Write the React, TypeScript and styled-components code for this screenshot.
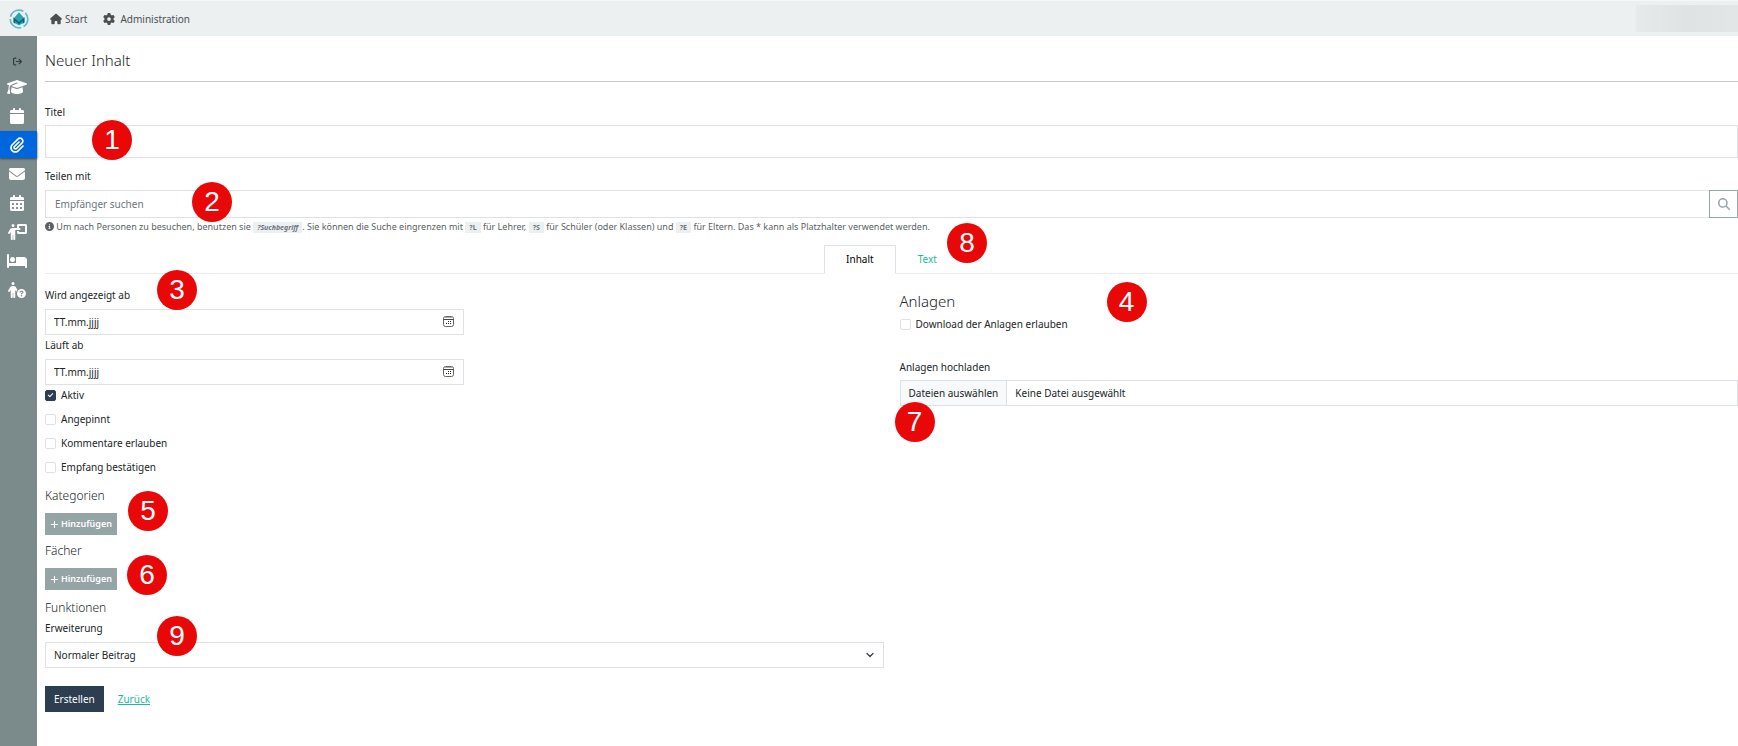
import React, { useState } from "react";
import styled, { createGlobalStyle, css } from "styled-components";
import {
  FaHouse, FaGear, FaGraduationCap, FaCalendar, FaPaperclip, FaEnvelope, FaCalendarDays,
  FaPersonChalkboard, FaBed, FaPersonCircleQuestion, FaCircleInfo, FaPlus, FaMagnifyingGlass, FaArrowRightFromBracket,
} from "react-icons/fa6";

const Global = createGlobalStyle`
  *, *::before, *::after { box-sizing: border-box; }
  body { margin: 0; background: #fff; color: #212529; font: 400 10px/16px "Noto Sans", sans-serif; }
  button, input, select { font: inherit; color: inherit; border-radius: 0; margin: 0; }
`;

const line = "#dee2e6";

const Page = styled.div`
  min-height: 100vh;
  display: flex;
  flex-direction: column;
`;

const Header = styled.header`
  height: 36px;
  display: flex;
  align-items: center;
  background: #ecf0f1;
  border-top: 1px solid #f5f7f8;
`;

const Logo = styled.a`
  width: 37px;
  display: flex;
  justify-content: center;
`;

const TopNav = styled.nav`
  display: flex;
  gap: 16px;
  padding-left: 13px;
  flex: 1;
`;

const TopLink = styled.a<{ $gap?: number }>`
  display: flex;
  align-items: center;
  gap: ${(p) => p.$gap ?? 3}px;
  color: #4b4f52;
  text-decoration: none;
  svg { width: 12px; height: 12px; }
`;

const UserArea = styled.div`
  width: 102px;
  height: 27px;
  background: linear-gradient(90deg, #e6eaeb, #dfe3e4 50%, #e2e6e7);
`;

const Body = styled.div`
  display: flex;
  flex: 1;
`;

const Sidebar = styled.nav`
  flex: 0 0 37px;
  display: flex;
  flex-direction: column;
  background: #7b8a8b;
  padding-top: 14px;
`;

const SideLink = styled.a<{ $active?: boolean; $dim?: boolean }>`
  height: 27px;
  margin-bottom: 2px;
  padding-right: 3px;
  display: flex;
  align-items: center;
  justify-content: center;
  color: #fff;
  svg { height: 16px; width: 20px; }
  ${(p) => p.$active && css`background: #0066dc; box-shadow: 0 1px 2px #3d4647;`}
  ${(p) => p.$dim && css`height: 22px; margin-bottom: 1px; color: #343a40; svg { height: 9px; width: 9px; }`}
`;

const Main = styled.main`
  flex: 1;
  min-width: 0;
  padding: 14px 0 32px 8px;
`;

const PageTitle = styled.h1`
  margin: 0;
  padding-bottom: 11px;
  font-size: 15px;
  line-height: 20px;
  font-weight: 300;
  border-bottom: 1px solid #c8cacc;
`;

const Heading = styled.h2<{ $large?: boolean; $top?: number }>`
  margin: 0;
  padding-top: ${(p) => p.$top ?? 0}px;
  font-size: ${(p) => (p.$large ? 15 : 12)}px;
  line-height: 20px;
  font-weight: 300;
`;

const Label = styled.label`
  display: block;
  line-height: 16px;
`;

const Field = styled.div<{ $top?: number; $gap?: number }>`
  display: flex;
  flex-direction: column;
  align-items: stretch;
  gap: ${(p) => p.$gap ?? 6}px;
  padding-top: ${(p) => p.$top ?? 0}px;
`;

const Input = styled.input<{ $tall?: boolean }>`
  width: 100%;
  min-width: 0;
  height: ${(p) => (p.$tall ? 33 : 26)}px;
  display: block;
  padding: 0 8px;
  border: 1px solid ${line};
  background: #fff;
  &::placeholder { color: inherit; opacity: 1; }
`;

const SearchGroup = styled.div`
  display: flex;
  height: 28px;
  ${Input} { flex: 1; height: 28px; padding: 0 9px; border-right: 0; color: #6c757d; }
`;

const SearchButton = styled.button`
  width: 29px;
  padding: 0;
  display: grid;
  place-items: center;
  border: 1px solid #95a5a6;
  background: #fff;
  color: #95a5a6;
  svg { width: 12px; height: 12px; }
`;

const Help = styled.p`
  margin: 0;
  padding-top: 2px;
  font-size: 9px;
  line-height: 14px;
  color: #5a5f63;
  svg { width: 9px; height: 9px; vertical-align: -1px; }
`;

const Code = styled.code<{ $italic?: boolean }>`
  padding: 1px 4px;
  background: #ecf0f1;
  font: ${(p) => (p.$italic ? "italic" : "normal")} 700 7px/12px "Noto Sans", sans-serif;
  color: #6c757d;
`;

const Tabs = styled.div`
  display: flex;
  justify-content: center;
  padding-top: 11px;
  border-bottom: 1px solid #ebedee;
`;

const Tab = styled.button<{ $active?: boolean }>`
  height: 29px;
  margin-bottom: -1px;
  padding: 0 21px 2px;
  border: 1px solid ${(p) => (p.$active ? line : "transparent")};
  border-bottom-color: ${(p) => (p.$active ? "#fff" : "transparent")};
  background: ${(p) => (p.$active ? "#fff" : "transparent")};
  color: ${(p) => (p.$active ? "#000" : "#18bc9c")};
`;

const Columns = styled.div`
  display: grid;
  grid-template-columns: 1fr 1fr;
  gap: 16px;
`;

const HalfWidth = styled.div`
  width: 50%;
`;

const Overlaid = styled.div`
  position: relative;
`;

const DateButton = styled.button`
  position: absolute;
  right: 10px;
  top: 7px;
  padding: 0;
  border: 0;
  background: none;
  display: flex;
`;

const CheckRow = styled.label`
  display: flex;
  align-items: center;
  gap: 5px;
  height: 24px;
`;

const Checkbox = styled.input`
  appearance: none;
  width: 11px;
  height: 11px;
  border: 1px solid ${line};
  border-radius: 2px;
  display: grid;
  place-items: center;
  &:checked { background: #2c3e50; border-color: #2c3e50; }
  &:checked::after {
    content: "";
    width: 3px;
    height: 5px;
    margin-top: -1px;
    border: solid #fff;
    border-width: 0 1px 1px 0;
    transform: rotate(45deg);
  }
`;

const CheckList = styled.div`
  margin: -2px 0 7px;
`;

const Section = styled.section`
  display: flex;
  flex-direction: column;
  align-items: flex-start;
  gap: 7px;
  margin-bottom: 6px;
`;

const AddButton = styled.button`
  height: 22px;
  display: flex;
  align-items: center;
  gap: 2px;
  padding: 0 5px;
  border: 0;
  background: #95a5a6;
  color: #fff;
  font-size: 9px;
  font-weight: 600;
`;

const Select = styled.select`
  appearance: none;
  display: block;
  width: 100%;
  height: 26px;
  padding: 0 8px;
  border: 1px solid ${line};
  background: #fff;
`;

const Chevron = styled.svg`
  position: absolute;
  right: 10px;
  top: 9px;
  pointer-events: none;
`;

const FileLabel = styled.label`
  display: flex;
  align-items: center;
  height: 26px;
  border: 1px solid ${line};
`;

const HiddenFile = styled.input`
  width: 0;
  height: 0;
  opacity: 0;
`;

const FileButton = styled.span`
  align-self: stretch;
  display: flex;
  align-items: center;
  padding: 0 8px;
  margin-right: 8px;
  border-right: 1px solid ${line};
  background: #f8f9fa;
`;

const Actions = styled.div`
  display: flex;
  align-items: center;
  gap: 14px;
  margin-top: 18px;
`;

const Submit = styled.button`
  height: 26px;
  padding: 0 9px;
  border: 0;
  background: #2c3e50;
  color: #fff;
`;

const BackLink = styled.a`
  color: #18bc9c;
`;

const Marker = styled.span<{ $x: number; $y: number }>`
  position: absolute;
  left: ${(p) => p.$x}px;
  top: ${(p) => p.$y}px;
  width: 40px;
  height: 40px;
  border-radius: 50%;
  background: #e90808;
  color: #fff;
  font: 28px/40px "Liberation Sans", Arial, sans-serif;
  text-align: center;
  pointer-events: none;
`;

const Anchor = styled.div`
  position: relative;
`;

const LogoMark = () => (
  <svg width="20" height="20" viewBox="0 0 20 20" aria-hidden="true">
    <circle cx="10" cy="10" r="8.8" fill="none" stroke="#5fbccb" strokeWidth="1.7" strokeDasharray="16 2.4" strokeDashoffset="7" />
    <circle cx="10" cy="10" r="7.2" fill="#e2f1f3" />
    <path d="M10 3.2L15 9V13.6L10 16.6L5 13.6V9Z" fill="#2ba3b4" />
    <path d="M4.4 13.4V8.2L10 13L15.6 8.2V13.4L13.8 14.8V11.8L10 15.2L6.2 11.8V14.8Z" fill="#0f6378" />
  </svg>
);

const CalendarGlyph = () => (
  <svg width="11" height="11" viewBox="0 0 11 11" aria-hidden="true">
    <rect x="0.5" y="0.5" width="10" height="10" rx="2" fill="#fff" stroke="#666" />
    <path d="M1 1.5H10" stroke="#aaa" />
    <path d="M0.5 3.5H10.5" stroke="#444" />
    <path d="M5 5.5h1M7 5.5h1M3 7.5h1M5 7.5h1M7 7.5h1" stroke="#222" />
  </svg>
);

const sideItems = [
  { name: "Unterricht", Icon: FaGraduationCap },
  { name: "Kalender", Icon: FaCalendar },
  { name: "Inhalte", Icon: FaPaperclip, active: true },
  { name: "Nachrichten", Icon: FaEnvelope },
  { name: "Termine", Icon: FaCalendarDays },
  { name: "Sprechtag", Icon: FaPersonChalkboard },
  { name: "Krankmeldung", Icon: FaBed },
  { name: "Vertretung", Icon: FaPersonCircleQuestion },
];

const options = ["Aktiv", "Angepinnt", "Kommentare erlauben", "Empfang bestätigen"];

const DateField = ({ id, label, top }: { id: string; label: string; top?: number }) => (
  <Field $top={top}>
    <Label htmlFor={id}>{label}</Label>
    <Overlaid>
      <Input id={id} placeholder="TT.mm.jjjj" />
      <DateButton type="button" aria-label={`${label}: Kalender öffnen`}><CalendarGlyph /></DateButton>
    </Overlaid>
  </Field>
);

export default function App() {
  const [tab, setTab] = useState("Inhalt");
  return (
    <Page>
      <Global />
      <Header>
        <Logo href="#" aria-label="Startseite"><LogoMark /></Logo>
        <TopNav>
          <TopLink href="#"><FaHouse />Start</TopLink>
          <TopLink href="#" $gap={5}><FaGear />Administration</TopLink>
        </TopNav>
        <UserArea />
      </Header>
      <Body>
        <Sidebar>
          <SideLink href="#" $dim aria-label="Menü"><FaArrowRightFromBracket /></SideLink>
          {sideItems.map(({ name, Icon, active }) => (
            <SideLink key={name} href="#" aria-label={name} $active={active}><Icon /></SideLink>
          ))}
        </Sidebar>
        <Main>
          <PageTitle>Neuer Inhalt</PageTitle>
          <Anchor>
            <Field $top={22} $gap={5}>
              <Label htmlFor="titel">Titel</Label>
              <Input id="titel" $tall />
            </Field>
            <Marker $x={47} $y={38}>1</Marker>
          </Anchor>
          <Anchor>
            <Field $top={10}>
              <Label htmlFor="teilen">Teilen mit</Label>
              <SearchGroup>
                <Input id="teilen" placeholder="Empfänger suchen" />
                <SearchButton type="button" aria-label="Suchen"><FaMagnifyingGlass /></SearchButton>
              </SearchGroup>
            </Field>
            <Help>
              <FaCircleInfo /> Um nach Personen zu besuchen, benutzen sie <Code $italic>?Suchbegriff</Code>. Sie können die Suche
              eingrenzen mit <Code>?L</Code> für Lehrer, <Code>?S</Code> für Schüler (oder Klassen) und <Code>?E</Code> für Eltern.
              Das * kann als Platzhalter verwendet werden.
            </Help>
            <Marker $x={147} $y={24}>2</Marker>
          </Anchor>
          <Anchor>
            <Tabs role="tablist">
              {["Inhalt", "Text"].map((t) => (
                <Tab key={t} type="button" role="tab" aria-selected={t === tab} $active={t === tab} onClick={() => setTab(t)}>{t}</Tab>
              ))}
            </Tabs>
            <Marker $x={902} $y={-11}>8</Marker>
          </Anchor>
          <Columns>
            <Anchor>
              <HalfWidth>
                <DateField id="ab" label="Wird angezeigt ab" top={13} />
                <DateField id="bis" label="Läuft ab" top={2} />
              </HalfWidth>
              <CheckList>
                {options.map((o, i) => (
                  <CheckRow key={o}><Checkbox type="checkbox" defaultChecked={i === 0} />{o}</CheckRow>
                ))}
              </CheckList>
              <Section>
                <Heading>Kategorien</Heading>
                <AddButton type="button"><FaPlus />Hinzufügen</AddButton>
              </Section>
              <Section>
                <Heading>Fächer</Heading>
                <AddButton type="button"><FaPlus />Hinzufügen</AddButton>
              </Section>
              <Heading $top={2}>Funktionen</Heading>
              <Field $top={2}>
                <Label htmlFor="erw">Erweiterung</Label>
                <Overlaid>
                  <Select id="erw"><option>Normaler Beitrag</option></Select>
                  <Chevron width="8" height="8" viewBox="0 0 8 8" aria-hidden="true">
                    <path d="M1 2.5L4 5.5L7 2.5" fill="none" stroke="#343a40" strokeWidth="1.2" strokeLinecap="round" strokeLinejoin="round" />
                  </Chevron>
                </Overlaid>
              </Field>
              <Actions>
                <Submit type="submit">Erstellen</Submit>
                <BackLink href="#">Zurück</BackLink>
              </Actions>
              <Marker $x={112} $y={-4}>3</Marker>
              <Marker $x={83} $y={217}>5</Marker>
              <Marker $x={82} $y={281}>6</Marker>
              <Marker $x={112} $y={342}>9</Marker>
            </Anchor>
            <Anchor>
              <Field $top={17} $gap={1}>
                <Heading $large>Anlagen</Heading>
                <CheckRow><Checkbox type="checkbox" />Download der Anlagen erlauben</CheckRow>
              </Field>
              <Field $top={23} $gap={5}>
                <Label htmlFor="dateien">Anlagen hochladen</Label>
                <FileLabel>
                  <FileButton>Dateien auswählen</FileButton>
                  Keine Datei ausgewählt
                  <HiddenFile id="dateien" type="file" multiple />
                </FileLabel>
              </Field>
              <Marker $x={207} $y={8}>4</Marker>
              <Marker $x={-5} $y={128}>7</Marker>
            </Anchor>
          </Columns>
        </Main>
      </Body>
    </Page>
  );
}
